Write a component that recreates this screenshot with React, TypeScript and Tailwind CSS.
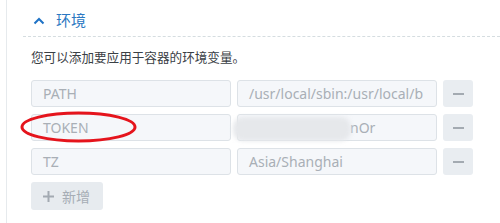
import { useState } from 'react'

type EnvRow = { name: string; value: string; hidden?: boolean }

const rows: EnvRow[] = [
  { name: 'PATH', value: '/usr/local/sbin:/usr/local/b' },
  { name: 'TOKEN', value: 'nOr', hidden: true },
  { name: 'TZ', value: 'Asia/Shanghai' },
]

const font = { fontFamily: '"Noto Sans", "Noto Sans CJK SC", sans-serif' }

function MinusButton() {
  return (
    <button className="w-[30px] h-[27px] rounded-[3px] bg-[#e9edf1] flex items-center justify-center shrink-0">
      <span className="block w-[11px] h-[2px] bg-[#a3aab1]" />
    </button>
  )
}

export default function App() {
  const [open] = useState(true)

  return (
    <div className="w-[500px] h-[223px] bg-white overflow-hidden" style={font}>
      <div className="ml-[6px] h-full border-l border-[#e6eaed] pl-4 relative">
        {/* Header */}
        <div className="h-[37px] flex items-center pl-[10px] gap-[11px] border-b border-dashed border-[#d5dde0] pt-[5px]">
          <svg width="12" height="8" viewBox="0 0 12 8" className="shrink-0">
            <path d="M1.5 6.5 L6 2 L10.5 6.5" fill="none" stroke="#1f73c6" strokeWidth="2" />
          </svg>
          <span className="text-[15px] text-[#2b78c2] leading-none">环境</span>
        </div>

        {/* Body */}
        <div className="pl-2">
          <p className="text-[12.6px] text-[#3a4045] mt-[12px] leading-[18px]">
            您可以添加要应用于容器的环境变量。
          </p>

          {open && (
            <div className="mt-[13px] flex flex-col gap-[7px]">
              {rows.map((r) => (
                <div key={r.name} className="flex items-center gap-[6px]">
                  <div className="w-[200px] h-[27px] rounded-[3px] border border-[#dde2e7] bg-[#f5f7fa] px-[11px] flex items-center text-[14px] text-[#a9afb6] shrink-0">
                    {r.name}
                  </div>
                  <div className="w-[200px] h-[27px] rounded-[3px] border border-[#dde2e7] bg-[#f5f7fa] px-[11px] flex items-center text-[14px] text-[#a9afb6] overflow-hidden whitespace-nowrap shrink-0">
                    {r.hidden && <span className="inline-block w-[101px] shrink-0" />}
                    {r.value}
                  </div>
                  <MinusButton />
                </div>
              ))}
            </div>
          )}

          <button className="mt-[7px] w-[72px] h-[28px] rounded-[3px] bg-[#e7ebef] flex items-center pl-[12px] gap-[8px] text-[14px] text-[#a6adb5]">
            <svg width="11" height="11" viewBox="0 0 11 11">
              <path d="M5.5 0 V11 M0 5.5 H11" stroke="#a3aab2" strokeWidth="2" />
            </svg>
            新增
          </button>
        </div>

        {/* Blurred secret */}
        <div className="absolute left-[226px] top-[117px] w-[118px] h-[24px] rounded-[10px] bg-[#e6e8eb] blur-[2px]" />

        {/* Red annotation */}
        <svg className="absolute left-[13px] top-[111px]" width="118" height="32" viewBox="0 0 118 32">
          <ellipse cx="58.5" cy="16" rx="56.5" ry="14" fill="none" stroke="#e5141c" strokeWidth="3" />
        </svg>
      </div>
    </div>
  )
}
